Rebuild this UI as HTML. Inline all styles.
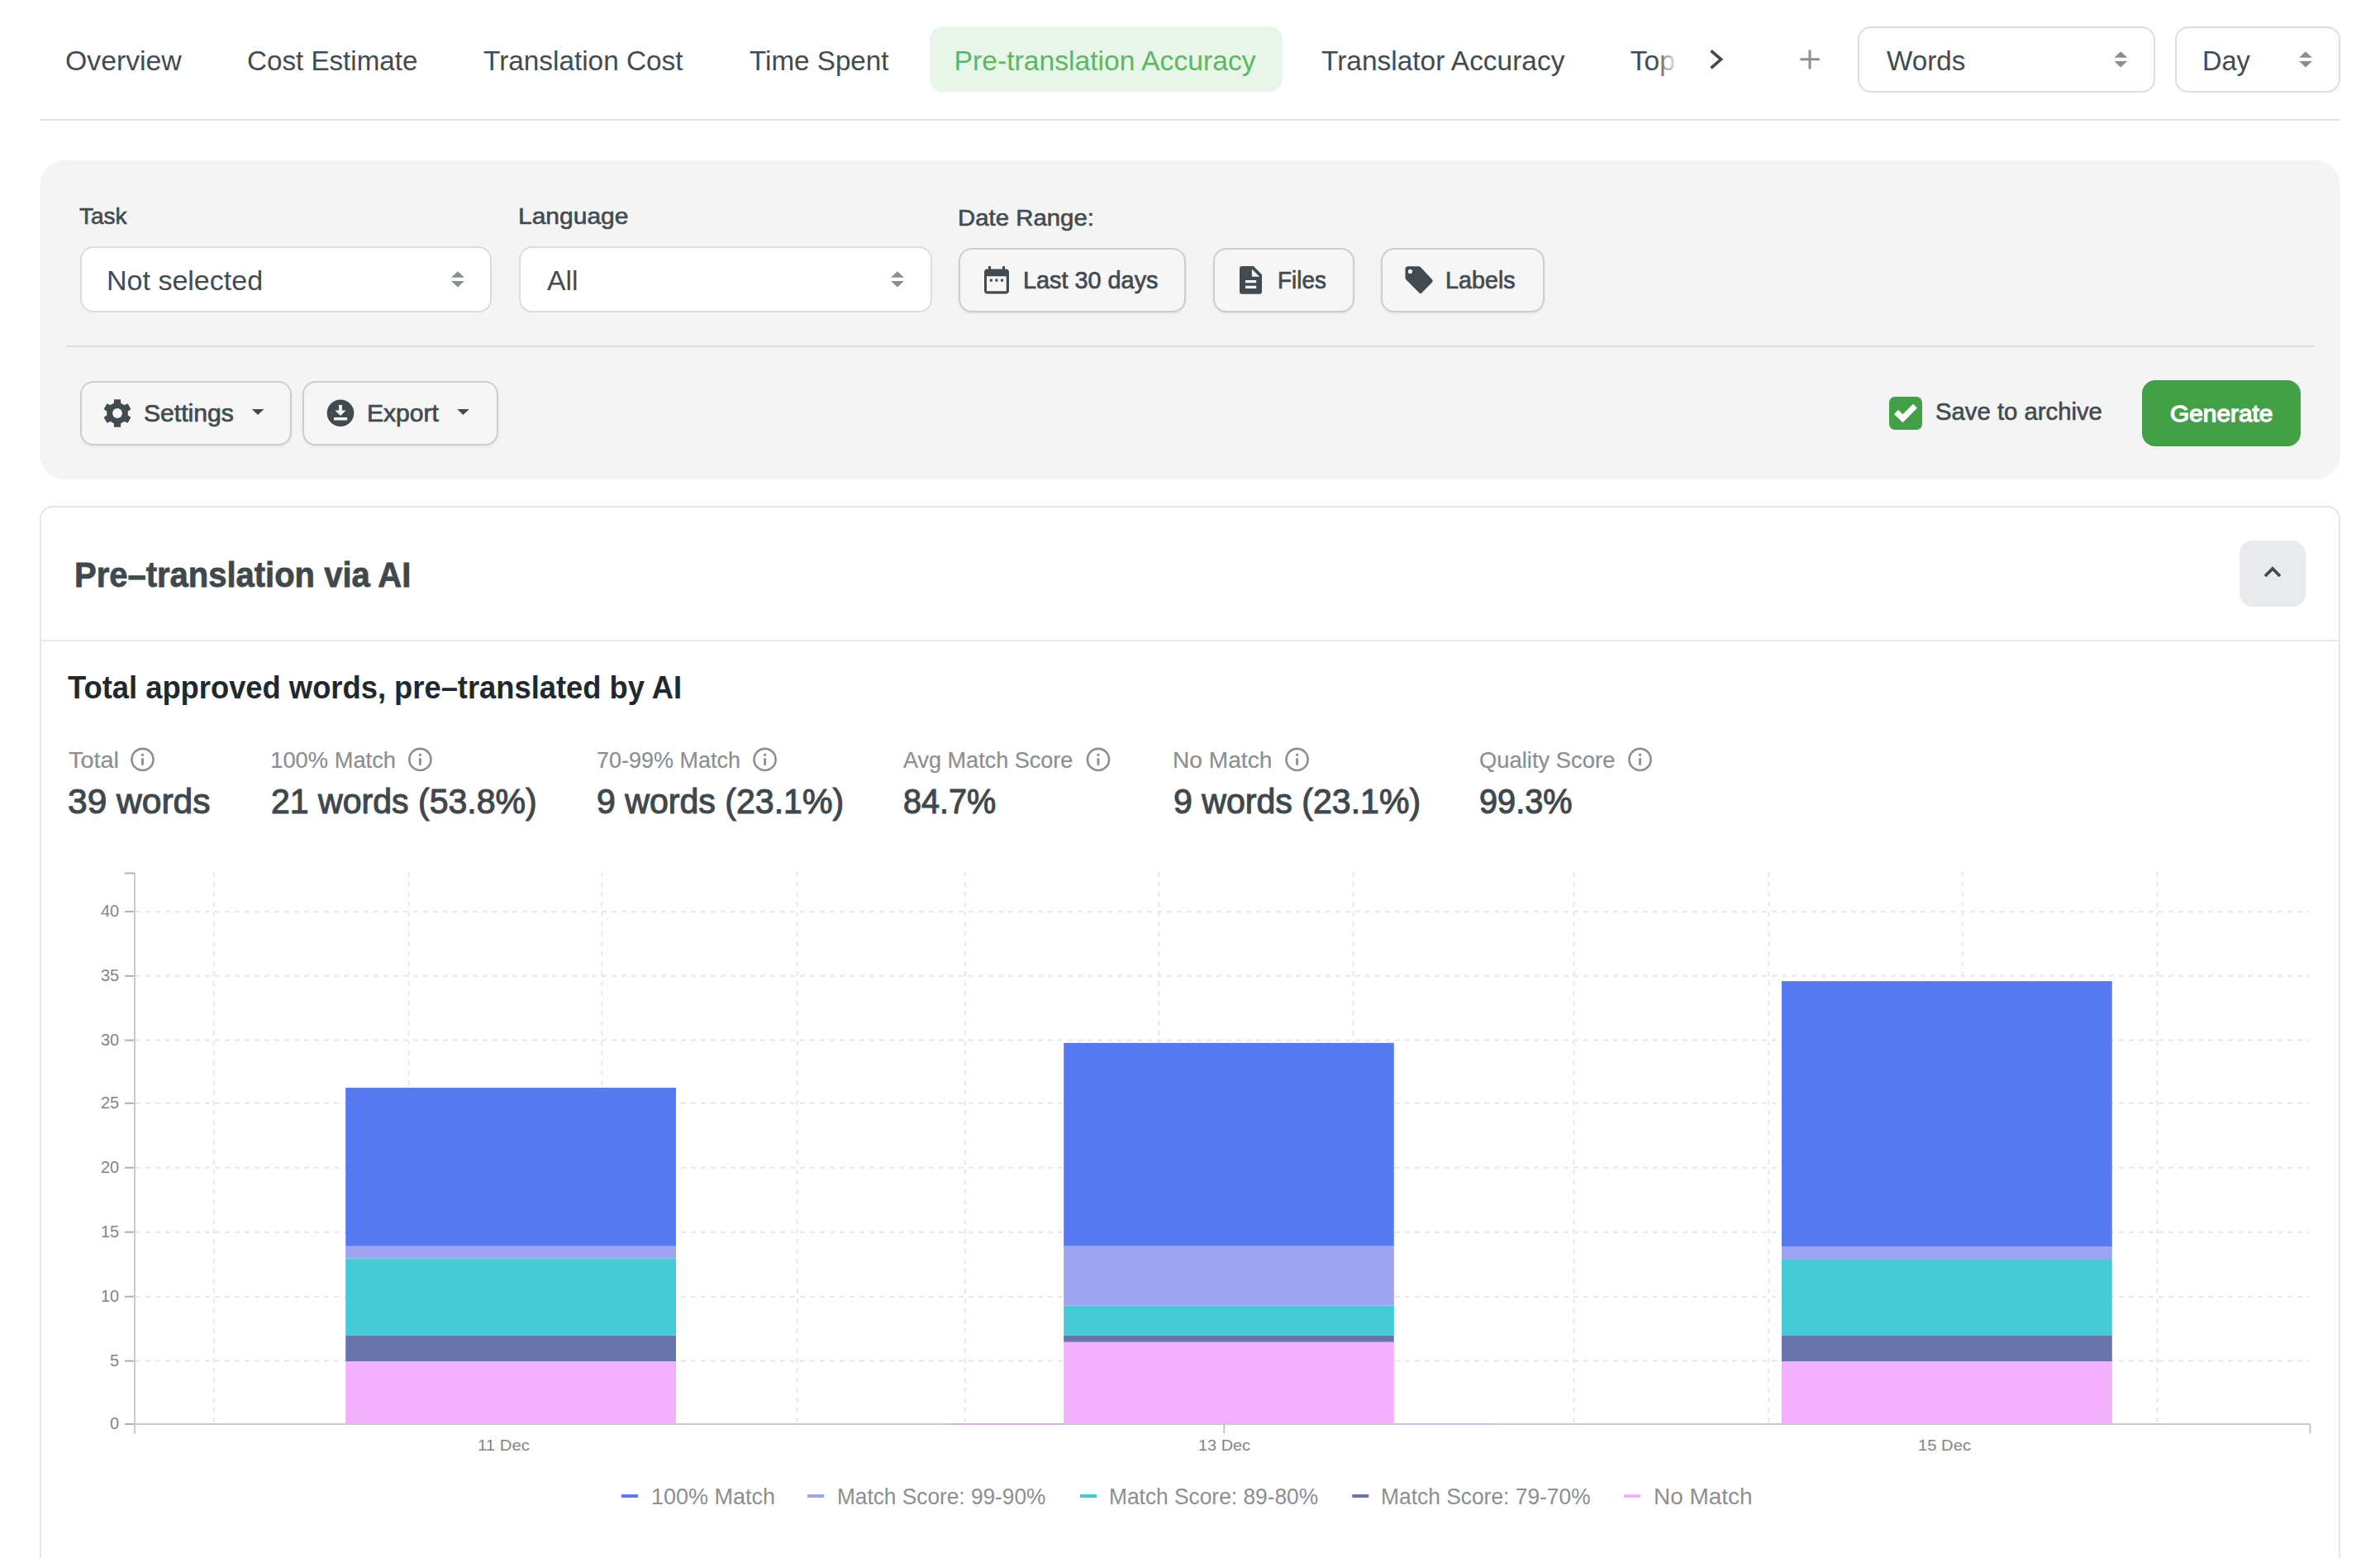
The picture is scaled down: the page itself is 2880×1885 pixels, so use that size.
<!DOCTYPE html>
<html><head><meta charset="utf-8"><title>Pre-translation Accuracy</title>
<style>html,body{margin:0;padding:0;background:#fff;overflow:hidden;}#root{position:relative;width:2880px;height:1885px;overflow:hidden;background:#fff;transform-origin:0 0;font-family:'Liberation Sans',sans-serif;}</style>
</head><body>
<div id="root">
<div style="position:absolute;left:1124.50px;top:32.00px;width:427.50px;height:79.00px;box-sizing:border-box;background:#e8f5e9;border-radius:16px;"></div>
<div style="position:absolute;left:2248.00px;top:32.00px;width:360.00px;height:80.00px;box-sizing:border-box;border:2px solid #dddddd;border-radius:16px;background:#fff;"></div>
<div style="position:absolute;left:2631.75px;top:32.00px;width:200.25px;height:80.00px;box-sizing:border-box;border:2px solid #dddddd;border-radius:16px;background:#fff;"></div>
<div style="position:absolute;left:48.00px;top:143.50px;width:2784.00px;height:2.00px;box-sizing:border-box;background:#e6e6e6;"></div>
<div style="position:absolute;left:48.00px;top:194.00px;width:2784.00px;height:386.00px;box-sizing:border-box;background:#f4f4f4;border-radius:30px;"></div>
<div style="position:absolute;left:96.50px;top:298.00px;width:498.50px;height:80.00px;box-sizing:border-box;border:2px solid #dcdcdc;border-radius:16px;background:#fff;"></div>
<div style="position:absolute;left:628.25px;top:298.00px;width:499.75px;height:80.00px;box-sizing:border-box;border:2px solid #dcdcdc;border-radius:16px;background:#fff;"></div>
<div style="position:absolute;left:1159.75px;top:300.00px;width:275.25px;height:77.50px;box-sizing:border-box;border:2px solid #cdcdcd;border-radius:16px;background:#f6f6f6;box-shadow:0 2px 3px rgba(0,0,0,0.06);"></div>
<div style="position:absolute;left:1468.00px;top:300.00px;width:171.00px;height:77.50px;box-sizing:border-box;border:2px solid #cdcdcd;border-radius:16px;background:#f6f6f6;box-shadow:0 2px 3px rgba(0,0,0,0.06);"></div>
<div style="position:absolute;left:1671.00px;top:300.00px;width:197.50px;height:77.50px;box-sizing:border-box;border:2px solid #cdcdcd;border-radius:16px;background:#f6f6f6;box-shadow:0 2px 3px rgba(0,0,0,0.06);"></div>
<div style="position:absolute;left:96.50px;top:461.00px;width:256.50px;height:78.00px;box-sizing:border-box;border:2px solid #cdcdcd;border-radius:16px;background:#f6f6f6;box-shadow:0 2px 3px rgba(0,0,0,0.06);"></div>
<div style="position:absolute;left:366.00px;top:461.00px;width:236.50px;height:78.00px;box-sizing:border-box;border:2px solid #cdcdcd;border-radius:16px;background:#f6f6f6;box-shadow:0 2px 3px rgba(0,0,0,0.06);"></div>
<div style="position:absolute;left:80.00px;top:417.75px;width:2720.00px;height:2.00px;box-sizing:border-box;background:#dfdfdf;"></div>
<div style="position:absolute;left:2286.00px;top:480.00px;width:40.00px;height:40.00px;box-sizing:border-box;background:#43a047;border-radius:7px;"></div>
<div style="position:absolute;left:2592.00px;top:460.00px;width:192.00px;height:79.50px;box-sizing:border-box;background:#43a047;border-radius:16px;"></div>
<div style="position:absolute;left:48.00px;top:612.00px;width:2784.00px;height:1488.00px;box-sizing:border-box;border:2px solid #e6e6e6;border-radius:16px;background:#fff;"></div>
<div style="position:absolute;left:50.00px;top:773.75px;width:2780.00px;height:2.00px;box-sizing:border-box;background:#e8e8e8;"></div>
<div style="position:absolute;left:2710.00px;top:654.00px;width:80.00px;height:80.00px;box-sizing:border-box;background:#e9eaeb;border-radius:16px;"></div>
<svg style="position:absolute;left:0;top:0" width="2880" height="1885"><path d="M546.1,335.7 L554,328.2 L561.9,335.7 Z M546.1,340.0 L561.9,340.0 L554,347.59999999999997 Z" fill="#8a8f8f"/><path d="M1078.1,335.7 L1086,328.2 L1093.9,335.7 Z M1078.1,340.0 L1093.9,340.0 L1086,347.59999999999997 Z" fill="#8a8f8f"/><path d="M2558.4,69.7 L2566.3,62.2 L2574.2000000000003,69.7 Z M2558.4,74.0 L2574.2000000000003,74.0 L2566.3,81.6 Z" fill="#8a8f8f"/><path d="M2782.1,69.7 L2790,62.2 L2797.9,69.7 Z M2782.1,74.0 L2797.9,74.0 L2790,81.6 Z" fill="#8a8f8f"/><path d="M2070.5,61.4 L2082.6,71.85 L2070.5,82.3" fill="none" stroke="#414b50" stroke-width="3.6"/><path d="M2190,60.4 V83.6 M2178.4,71.85 H2201.9" fill="none" stroke="#8a9090" stroke-width="3"/><g transform="translate(1191,322)" fill="#414b50"><path fill-rule="evenodd" d="M4,3.5 H26 Q30,3.5 30,7.5 V29.5 Q30,33.5 26,33.5 H4 Q0,33.5 0,29.5 V7.5 Q0,3.5 4,3.5 Z M3,12.3 V30.2 H26.8 V12.3 Z"/><rect x="5" y="0" width="3" height="5"/><rect x="22" y="0" width="3" height="5"/><rect x="6.8" y="15.5" width="3" height="3.2"/><rect x="13.4" y="15.5" width="3" height="3.2"/><rect x="20" y="15.5" width="3" height="3.2"/></g><g transform="translate(1500,322)"><path fill="#414b50" fill-rule="evenodd" d="M3,0 H16.8 L27,10.2 V30.8 Q27,33.8 24,33.8 H3 Q0,33.8 0,30.8 V3 Q0,0 3,0 Z M14.9,3.5 V12.7 H24.1 Z M7,17.1 V20.3 H20.2 V17.1 Z M7,23.8 V27 H20.2 V23.8 Z"/></g><g transform="translate(1700.5,322.2)"><path fill="#414b50" fill-rule="evenodd" d="M3.5,0 H16 Q17.5,0 18.6,1.1 L32.6,16 Q34,17.7 32.6,19.3 L19.8,32.4 Q18.4,33.8 17,32.4 L1.1,16.3 Q0,15.2 0,13.6 V3.5 Q0,0 3.5,0 Z M6,3.6 A2.6,2.6 0 1 0 6,8.8 A2.6,2.6 0 1 0 6,3.6 Z"/></g><circle cx="142" cy="500" r="12.8" fill="#414b50"/><path d="M138.1,483.3 H145.9 L146.6,491 H137.4 Z" fill="#414b50" transform="rotate(0 142 500)"/><path d="M138.1,483.3 H145.9 L146.6,491 H137.4 Z" fill="#414b50" transform="rotate(60 142 500)"/><path d="M138.1,483.3 H145.9 L146.6,491 H137.4 Z" fill="#414b50" transform="rotate(120 142 500)"/><path d="M138.1,483.3 H145.9 L146.6,491 H137.4 Z" fill="#414b50" transform="rotate(180 142 500)"/><path d="M138.1,483.3 H145.9 L146.6,491 H137.4 Z" fill="#414b50" transform="rotate(240 142 500)"/><path d="M138.1,483.3 H145.9 L146.6,491 H137.4 Z" fill="#414b50" transform="rotate(300 142 500)"/><circle cx="142" cy="500" r="5.9" fill="#f6f6f6"/><circle cx="412" cy="499.7" r="16.3" fill="#414b50"/><path d="M410.1,489.9 H413.9 V496.5 H418.6 L412,503.1 L405.4,496.5 H410.1 Z M404,505 H420.2 V508.4 H404 Z" fill="#f6f6f6"/><path d="M304.8,495.1 H319.4 L312.1,502.1 Z" fill="#414b50"/><path d="M553.2,495.1 H567.8 L560.5,502.1 Z" fill="#414b50"/><path d="M2286,480 m6,21 l5,-5 l5.5,5.2 l12.5,-12.4 l4.8,4.9 l-17.3,17.5 Z" fill="#fff"/><path d="M2741,697 L2750,688 L2759,697" fill="none" stroke="#414b50" stroke-width="3.8"/><circle cx="172.5" cy="918.9" r="13.05" fill="none" stroke="#8a8f8f" stroke-width="2.6"/><circle cx="172.5" cy="913.1999999999999" r="1.6" fill="#8a8f8f"/><rect x="171.1" y="917.3" width="2.8" height="8.5" fill="#8a8f8f"/><circle cx="508.4" cy="918.9" r="13.05" fill="none" stroke="#8a8f8f" stroke-width="2.6"/><circle cx="508.4" cy="913.1999999999999" r="1.6" fill="#8a8f8f"/><rect x="507.0" y="917.3" width="2.8" height="8.5" fill="#8a8f8f"/><circle cx="925.6" cy="918.9" r="13.05" fill="none" stroke="#8a8f8f" stroke-width="2.6"/><circle cx="925.6" cy="913.1999999999999" r="1.6" fill="#8a8f8f"/><rect x="924.2" y="917.3" width="2.8" height="8.5" fill="#8a8f8f"/><circle cx="1329" cy="918.9" r="13.05" fill="none" stroke="#8a8f8f" stroke-width="2.6"/><circle cx="1329" cy="913.1999999999999" r="1.6" fill="#8a8f8f"/><rect x="1327.6" y="917.3" width="2.8" height="8.5" fill="#8a8f8f"/><circle cx="1569.6" cy="918.9" r="13.05" fill="none" stroke="#8a8f8f" stroke-width="2.6"/><circle cx="1569.6" cy="913.1999999999999" r="1.6" fill="#8a8f8f"/><rect x="1568.1999999999998" y="917.3" width="2.8" height="8.5" fill="#8a8f8f"/><circle cx="1984.6" cy="918.9" r="13.05" fill="none" stroke="#8a8f8f" stroke-width="2.6"/><circle cx="1984.6" cy="913.1999999999999" r="1.6" fill="#8a8f8f"/><rect x="1983.1999999999998" y="917.3" width="2.8" height="8.5" fill="#8a8f8f"/><line x1="164" y1="1646.6" x2="2795" y2="1646.6" stroke="#e8e8e8" stroke-width="2" stroke-dasharray="6 6"/><line x1="164" y1="1568.7" x2="2795" y2="1568.7" stroke="#e8e8e8" stroke-width="2" stroke-dasharray="6 6"/><line x1="164" y1="1490.7" x2="2795" y2="1490.7" stroke="#e8e8e8" stroke-width="2" stroke-dasharray="6 6"/><line x1="164" y1="1412.8" x2="2795" y2="1412.8" stroke="#e8e8e8" stroke-width="2" stroke-dasharray="6 6"/><line x1="164" y1="1334.8" x2="2795" y2="1334.8" stroke="#e8e8e8" stroke-width="2" stroke-dasharray="6 6"/><line x1="164" y1="1258.6" x2="2795" y2="1258.6" stroke="#e8e8e8" stroke-width="2" stroke-dasharray="6 6"/><line x1="164" y1="1180.8" x2="2795" y2="1180.8" stroke="#e8e8e8" stroke-width="2" stroke-dasharray="6 6"/><line x1="164" y1="1102.9" x2="2795" y2="1102.9" stroke="#e8e8e8" stroke-width="2" stroke-dasharray="6 6"/><line x1="258.7" y1="1055" x2="258.7" y2="1722" stroke="#e8e8e8" stroke-width="2" stroke-dasharray="6 6"/><line x1="494.6" y1="1055" x2="494.6" y2="1722" stroke="#e8e8e8" stroke-width="2" stroke-dasharray="6 6"/><line x1="728.3" y1="1055" x2="728.3" y2="1722" stroke="#e8e8e8" stroke-width="2" stroke-dasharray="6 6"/><line x1="964.7" y1="1055" x2="964.7" y2="1722" stroke="#e8e8e8" stroke-width="2" stroke-dasharray="6 6"/><line x1="1168" y1="1055" x2="1168" y2="1722" stroke="#e8e8e8" stroke-width="2" stroke-dasharray="6 6"/><line x1="1402.2" y1="1055" x2="1402.2" y2="1722" stroke="#e8e8e8" stroke-width="2" stroke-dasharray="6 6"/><line x1="1637.7" y1="1055" x2="1637.7" y2="1722" stroke="#e8e8e8" stroke-width="2" stroke-dasharray="6 6"/><line x1="1904.5" y1="1055" x2="1904.5" y2="1722" stroke="#e8e8e8" stroke-width="2" stroke-dasharray="6 6"/><line x1="2140.5" y1="1055" x2="2140.5" y2="1722" stroke="#e8e8e8" stroke-width="2" stroke-dasharray="6 6"/><line x1="2374.7" y1="1055" x2="2374.7" y2="1722" stroke="#e8e8e8" stroke-width="2" stroke-dasharray="6 6"/><line x1="2610.6" y1="1055" x2="2610.6" y2="1722" stroke="#e8e8e8" stroke-width="2" stroke-dasharray="6 6"/><rect x="418.2" y="1316" width="399.8" height="191.79999999999995" fill="#577af3"/><rect x="418.2" y="1507.8" width="399.8" height="14.700000000000045" fill="#9da5f2"/><rect x="418.2" y="1522.5" width="399.8" height="93.29999999999995" fill="#45cbd6"/><rect x="418.2" y="1615.8" width="399.8" height="31.200000000000045" fill="#6874ab"/><rect x="418.2" y="1647" width="399.8" height="76" fill="#f2b0fd"/><rect x="1287.2" y="1261.8" width="399.5999999999999" height="245.9000000000001" fill="#577af3"/><rect x="1287.2" y="1507.7" width="399.5999999999999" height="71.79999999999995" fill="#9da5f2"/><rect x="1287.2" y="1579.5" width="399.5999999999999" height="36.299999999999955" fill="#45cbd6"/><rect x="1287.2" y="1615.8" width="399.5999999999999" height="8.0" fill="#6874ab"/><rect x="1287.2" y="1623.8" width="399.5999999999999" height="99.20000000000005" fill="#f2b0fd"/><rect x="2156" y="1187.1" width="399.8000000000002" height="320.9000000000001" fill="#577af3"/><rect x="2156" y="1508" width="399.8000000000002" height="15.099999999999909" fill="#9da5f2"/><rect x="2156" y="1523.1" width="399.8000000000002" height="92.80000000000018" fill="#45cbd6"/><rect x="2156" y="1615.9" width="399.8000000000002" height="31.09999999999991" fill="#6874ab"/><rect x="2156" y="1647" width="399.8000000000002" height="76" fill="#f2b0fd"/><line x1="163" y1="1056.5" x2="163" y2="1734.5" stroke="#cbcbcb" stroke-width="2"/><line x1="151" y1="1056.5" x2="163" y2="1056.5" stroke="#b0b0b0" stroke-width="2"/><line x1="163" y1="1723" x2="2795.5" y2="1723" stroke="#cacaca" stroke-width="2"/><line x1="2795.5" y1="1723" x2="2795.5" y2="1734.5" stroke="#c6c6c6" stroke-width="2"/><line x1="1481.3" y1="1723" x2="1481.3" y2="1734.5" stroke="#c6c6c6" stroke-width="2"/><line x1="151" y1="1723" x2="162" y2="1723" stroke="#b0b0b0" stroke-width="2"/><text x="144.2" y="1729.2" text-anchor="end" font-family="Liberation Sans" font-size="20" fill="#858585">0</text><line x1="151" y1="1646.6" x2="162" y2="1646.6" stroke="#b0b0b0" stroke-width="2"/><text x="144.2" y="1652.8" text-anchor="end" font-family="Liberation Sans" font-size="20" fill="#858585">5</text><line x1="151" y1="1568.7" x2="162" y2="1568.7" stroke="#b0b0b0" stroke-width="2"/><text x="144.2" y="1574.9" text-anchor="end" font-family="Liberation Sans" font-size="20" fill="#858585">10</text><line x1="151" y1="1490.7" x2="162" y2="1490.7" stroke="#b0b0b0" stroke-width="2"/><text x="144.2" y="1496.9" text-anchor="end" font-family="Liberation Sans" font-size="20" fill="#858585">15</text><line x1="151" y1="1412.8" x2="162" y2="1412.8" stroke="#b0b0b0" stroke-width="2"/><text x="144.2" y="1419.0" text-anchor="end" font-family="Liberation Sans" font-size="20" fill="#858585">20</text><line x1="151" y1="1334.8" x2="162" y2="1334.8" stroke="#b0b0b0" stroke-width="2"/><text x="144.2" y="1341.0" text-anchor="end" font-family="Liberation Sans" font-size="20" fill="#858585">25</text><line x1="151" y1="1258.6" x2="162" y2="1258.6" stroke="#b0b0b0" stroke-width="2"/><text x="144.2" y="1264.8" text-anchor="end" font-family="Liberation Sans" font-size="20" fill="#858585">30</text><line x1="151" y1="1180.8" x2="162" y2="1180.8" stroke="#b0b0b0" stroke-width="2"/><text x="144.2" y="1187.0" text-anchor="end" font-family="Liberation Sans" font-size="20" fill="#858585">35</text><line x1="151" y1="1102.9" x2="162" y2="1102.9" stroke="#b0b0b0" stroke-width="2"/><text x="144.2" y="1109.1000000000001" text-anchor="end" font-family="Liberation Sans" font-size="20" fill="#858585">40</text><rect x="1150" y="1722" width="137" height="1.5" fill="#d4b0df"/><rect x="1687" y="1722" width="122" height="1.5" fill="#d8bde2"/><rect x="752" y="1808" width="20" height="4" fill="#577af3"/><rect x="977" y="1808" width="20" height="4" fill="#9da5f2"/><rect x="1307" y="1808" width="20" height="4" fill="#45cbd6"/><rect x="1636.25" y="1808" width="20" height="4" fill="#6874ab"/><rect x="1965" y="1808" width="20" height="4" fill="#f2b0fd"/></svg>
<div style="position:absolute;left:79.00px;top:57.30px;font-family:'Liberation Sans',sans-serif;font-size:33.7px;font-weight:400;line-height:1;white-space:nowrap;color:#414b50;transform:scaleX(1.0022);transform-origin:0 0;">Overview</div>
<div style="position:absolute;left:298.73px;top:57.30px;font-family:'Liberation Sans',sans-serif;font-size:33.7px;font-weight:400;line-height:1;white-space:nowrap;color:#414b50;transform:scaleX(0.9845);transform-origin:0 0;">Cost Estimate</div>
<div style="position:absolute;left:584.51px;top:57.30px;font-family:'Liberation Sans',sans-serif;font-size:33.7px;font-weight:400;line-height:1;white-space:nowrap;color:#414b50;transform:scaleX(0.9897);transform-origin:0 0;">Translation Cost</div>
<div style="position:absolute;left:906.51px;top:57.30px;font-family:'Liberation Sans',sans-serif;font-size:33.7px;font-weight:400;line-height:1;white-space:nowrap;color:#414b50;transform:scaleX(0.9853);transform-origin:0 0;">Time Spent</div>
<div style="position:absolute;left:1154.50px;top:57.30px;font-family:'Liberation Sans',sans-serif;font-size:33.7px;font-weight:400;line-height:1;white-space:nowrap;color:#5cb85f;">Pre-translation Accuracy</div>
<div style="position:absolute;left:1599.01px;top:57.30px;font-family:'Liberation Sans',sans-serif;font-size:33.7px;font-weight:400;line-height:1;white-space:nowrap;color:#414b50;transform:scaleX(0.9932);transform-origin:0 0;">Translator Accuracy</div>
<div style="position:absolute;left:1972.75px;top:57.30px;font-family:'Liberation Sans',sans-serif;font-size:33.7px;font-weight:400;line-height:1;white-space:nowrap;color:#414b50;">Top</div>
<div style="position:absolute;left:2282.50px;top:57.30px;font-family:'Liberation Sans',sans-serif;font-size:33.7px;font-weight:400;line-height:1;white-space:nowrap;color:#414b50;transform:scaleX(0.9844);transform-origin:0 0;">Words</div>
<div style="position:absolute;left:2665.11px;top:57.30px;font-family:'Liberation Sans',sans-serif;font-size:33.7px;font-weight:400;line-height:1;white-space:nowrap;color:#414b50;transform:scaleX(0.9649);transform-origin:0 0;">Day</div>
<div style="position:absolute;left:96.25px;top:247.25px;font-family:'Liberation Sans',sans-serif;font-size:28.5px;font-weight:400;line-height:1;white-space:nowrap;color:#414b50;-webkit-text-stroke:0.6px #414b50;transform:scaleX(0.9831);transform-origin:0 0;">Task</div>
<div style="position:absolute;left:627.40px;top:247.25px;font-family:'Liberation Sans',sans-serif;font-size:28.5px;font-weight:400;line-height:1;white-space:nowrap;color:#414b50;-webkit-text-stroke:0.6px #414b50;transform:scaleX(1.0524);transform-origin:0 0;">Language</div>
<div style="position:absolute;left:1159.19px;top:249.25px;font-family:'Liberation Sans',sans-serif;font-size:28.5px;font-weight:400;line-height:1;white-space:nowrap;color:#414b50;-webkit-text-stroke:0.6px #414b50;transform:scaleX(1.0304);transform-origin:0 0;">Date Range:</div>
<div style="position:absolute;left:128.97px;top:323.00px;font-family:'Liberation Sans',sans-serif;font-size:33.7px;font-weight:400;line-height:1;white-space:nowrap;color:#414b50;transform:scaleX(1.0096);transform-origin:0 0;">Not selected</div>
<div style="position:absolute;left:662.00px;top:323.00px;font-family:'Liberation Sans',sans-serif;font-size:33.7px;font-weight:400;line-height:1;white-space:nowrap;color:#414b50;">All</div>
<div style="position:absolute;left:1237.55px;top:324.25px;font-family:'Liberation Sans',sans-serif;font-size:29.5px;font-weight:400;line-height:1;white-space:nowrap;color:#414b50;-webkit-text-stroke:0.7px #414b50;transform:scaleX(0.9773);transform-origin:0 0;">Last 30 days</div>
<div style="position:absolute;left:1545.61px;top:324.10px;font-family:'Liberation Sans',sans-serif;font-size:29.5px;font-weight:400;line-height:1;white-space:nowrap;color:#414b50;-webkit-text-stroke:0.7px #414b50;transform:scaleX(0.9458);transform-origin:0 0;">Files</div>
<div style="position:absolute;left:1749.05px;top:324.10px;font-family:'Liberation Sans',sans-serif;font-size:29.5px;font-weight:400;line-height:1;white-space:nowrap;color:#414b50;-webkit-text-stroke:0.7px #414b50;transform:scaleX(0.9735);transform-origin:0 0;">Labels</div>
<div style="position:absolute;left:173.96px;top:486.00px;font-family:'Liberation Sans',sans-serif;font-size:29px;font-weight:400;line-height:1;white-space:nowrap;color:#414b50;-webkit-text-stroke:0.7px #414b50;transform:scaleX(1.0388);transform-origin:0 0;">Settings</div>
<div style="position:absolute;left:443.93px;top:486.00px;font-family:'Liberation Sans',sans-serif;font-size:29px;font-weight:400;line-height:1;white-space:nowrap;color:#414b50;-webkit-text-stroke:0.7px #414b50;transform:scaleX(1.0366);transform-origin:0 0;">Export</div>
<div style="position:absolute;left:2341.99px;top:484.00px;font-family:'Liberation Sans',sans-serif;font-size:29px;font-weight:400;line-height:1;white-space:nowrap;color:#414b50;-webkit-text-stroke:0.6px #414b50;transform:scaleX(1.0101);transform-origin:0 0;">Save to archive</div>
<div style="position:absolute;left:2625.70px;top:486.00px;font-family:'Liberation Sans',sans-serif;font-size:28.5px;font-weight:400;line-height:1;white-space:nowrap;color:#ffffff;-webkit-text-stroke:1.3px #ffffff;transform:scaleX(1.0470);transform-origin:0 0;">Generate</div>
<div style="position:absolute;left:90.14px;top:674.00px;font-family:'Liberation Sans',sans-serif;font-size:43px;font-weight:700;line-height:1;white-space:nowrap;color:#3e484d;-webkit-text-stroke:0.8px #3e484d;transform:scaleX(0.9297);transform-origin:0 0;">Pre–translation via AI</div>
<div style="position:absolute;left:82.00px;top:813.20px;font-family:'Liberation Sans',sans-serif;font-size:38.5px;font-weight:700;line-height:1;white-space:nowrap;color:#1f2a30;transform:scaleX(0.9439);transform-origin:0 0;">Total approved words, pre–translated by AI</div>
<div style="position:absolute;left:82.50px;top:906.25px;font-family:'Liberation Sans',sans-serif;font-size:27.3px;font-weight:400;line-height:1;white-space:nowrap;color:#8a8f91;-webkit-text-stroke:0.2px #8a8f91;transform:scaleX(1.0580);transform-origin:0 0;">Total</div>
<div style="position:absolute;left:327.25px;top:906.25px;font-family:'Liberation Sans',sans-serif;font-size:27.3px;font-weight:400;line-height:1;white-space:nowrap;color:#8a8f91;-webkit-text-stroke:0.2px #8a8f91;">100% Match</div>
<div style="position:absolute;left:721.51px;top:906.25px;font-family:'Liberation Sans',sans-serif;font-size:27.3px;font-weight:400;line-height:1;white-space:nowrap;color:#8a8f91;-webkit-text-stroke:0.2px #8a8f91;transform:scaleX(0.9885);transform-origin:0 0;">70-99% Match</div>
<div style="position:absolute;left:1093.00px;top:906.25px;font-family:'Liberation Sans',sans-serif;font-size:27.3px;font-weight:400;line-height:1;white-space:nowrap;color:#8a8f91;-webkit-text-stroke:0.2px #8a8f91;transform:scaleX(0.9903);transform-origin:0 0;">Avg Match Score</div>
<div style="position:absolute;left:1418.69px;top:906.25px;font-family:'Liberation Sans',sans-serif;font-size:27.3px;font-weight:400;line-height:1;white-space:nowrap;color:#8a8f91;-webkit-text-stroke:0.2px #8a8f91;transform:scaleX(1.0307);transform-origin:0 0;">No Match</div>
<div style="position:absolute;left:1790.25px;top:906.25px;font-family:'Liberation Sans',sans-serif;font-size:27.3px;font-weight:400;line-height:1;white-space:nowrap;color:#8a8f91;-webkit-text-stroke:0.2px #8a8f91;transform:scaleX(1.0031);transform-origin:0 0;">Quality Score</div>
<div style="position:absolute;left:82.00px;top:949.20px;font-family:'Liberation Sans',sans-serif;font-size:42.5px;font-weight:400;line-height:1;white-space:nowrap;color:#3f484d;-webkit-text-stroke:1.1px #3f484d;">39 words</div>
<div style="position:absolute;left:327.78px;top:949.20px;font-family:'Liberation Sans',sans-serif;font-size:42.5px;font-weight:400;line-height:1;white-space:nowrap;color:#3f484d;-webkit-text-stroke:1.1px #3f484d;transform:scaleX(0.9659);transform-origin:0 0;">21 words (53.8%)</div>
<div style="position:absolute;left:721.53px;top:949.20px;font-family:'Liberation Sans',sans-serif;font-size:42.5px;font-weight:400;line-height:1;white-space:nowrap;color:#3f484d;-webkit-text-stroke:1.1px #3f484d;transform:scaleX(0.9666);transform-origin:0 0;">9 words (23.1%)</div>
<div style="position:absolute;left:1092.82px;top:949.20px;font-family:'Liberation Sans',sans-serif;font-size:42.5px;font-weight:400;line-height:1;white-space:nowrap;color:#3f484d;-webkit-text-stroke:1.1px #3f484d;transform:scaleX(0.9307);transform-origin:0 0;">84.7%</div>
<div style="position:absolute;left:1419.78px;top:949.20px;font-family:'Liberation Sans',sans-serif;font-size:42.5px;font-weight:400;line-height:1;white-space:nowrap;color:#3f484d;-webkit-text-stroke:1.1px #3f484d;transform:scaleX(0.9666);transform-origin:0 0;">9 words (23.1%)</div>
<div style="position:absolute;left:1790.32px;top:949.20px;font-family:'Liberation Sans',sans-serif;font-size:42.5px;font-weight:400;line-height:1;white-space:nowrap;color:#3f484d;-webkit-text-stroke:1.1px #3f484d;transform:scaleX(0.9349);transform-origin:0 0;">99.3%</div>
<div style="position:absolute;left:788.02px;top:1797.00px;font-family:'Liberation Sans',sans-serif;font-size:27.3px;font-weight:400;line-height:1;white-space:nowrap;color:#8a8f91;transform:scaleX(0.9882);transform-origin:0 0;">100% Match</div>
<div style="position:absolute;left:1013.08px;top:1797.00px;font-family:'Liberation Sans',sans-serif;font-size:27.3px;font-weight:400;line-height:1;white-space:nowrap;color:#8a8f91;transform:scaleX(0.9615);transform-origin:0 0;">Match Score: 99-90%</div>
<div style="position:absolute;left:1342.32px;top:1797.00px;font-family:'Liberation Sans',sans-serif;font-size:27.3px;font-weight:400;line-height:1;white-space:nowrap;color:#8a8f91;transform:scaleX(0.9644);transform-origin:0 0;">Match Score: 89-80%</div>
<div style="position:absolute;left:1671.32px;top:1797.00px;font-family:'Liberation Sans',sans-serif;font-size:27.3px;font-weight:400;line-height:1;white-space:nowrap;color:#8a8f91;transform:scaleX(0.9663);transform-origin:0 0;">Match Score: 79-70%</div>
<div style="position:absolute;left:2000.95px;top:1797.00px;font-family:'Liberation Sans',sans-serif;font-size:27.3px;font-weight:400;line-height:1;white-space:nowrap;color:#8a8f91;transform:scaleX(1.0243);transform-origin:0 0;">No Match</div>
<div style="position:absolute;left:577.93px;top:1739.00px;font-family:'Liberation Sans',sans-serif;font-size:19px;font-weight:400;line-height:1;white-space:nowrap;color:#858585;transform:scaleX(1.0702);transform-origin:0 0;">11 Dec</div>
<div style="position:absolute;left:1449.70px;top:1739.00px;font-family:'Liberation Sans',sans-serif;font-size:19px;font-weight:400;line-height:1;white-space:nowrap;color:#858585;transform:scaleX(1.0466);transform-origin:0 0;">13 Dec</div>
<div style="position:absolute;left:2320.94px;top:1739.00px;font-family:'Liberation Sans',sans-serif;font-size:19px;font-weight:400;line-height:1;white-space:nowrap;color:#858585;transform:scaleX(1.0627);transform-origin:0 0;">15 Dec</div>
<div style="position:absolute;left:2004.00px;top:40.00px;width:36.00px;height:65.00px;box-sizing:border-box;background:linear-gradient(90deg, rgba(255,255,255,0) 0%, #fff 75%);"></div>
</div>
<script>(function(){var w=window.innerWidth;if(w&&Math.abs(w-2880)>4){document.getElementById('root').style.transform='scale('+(w/2880)+')';}})();</script>
</body></html>
